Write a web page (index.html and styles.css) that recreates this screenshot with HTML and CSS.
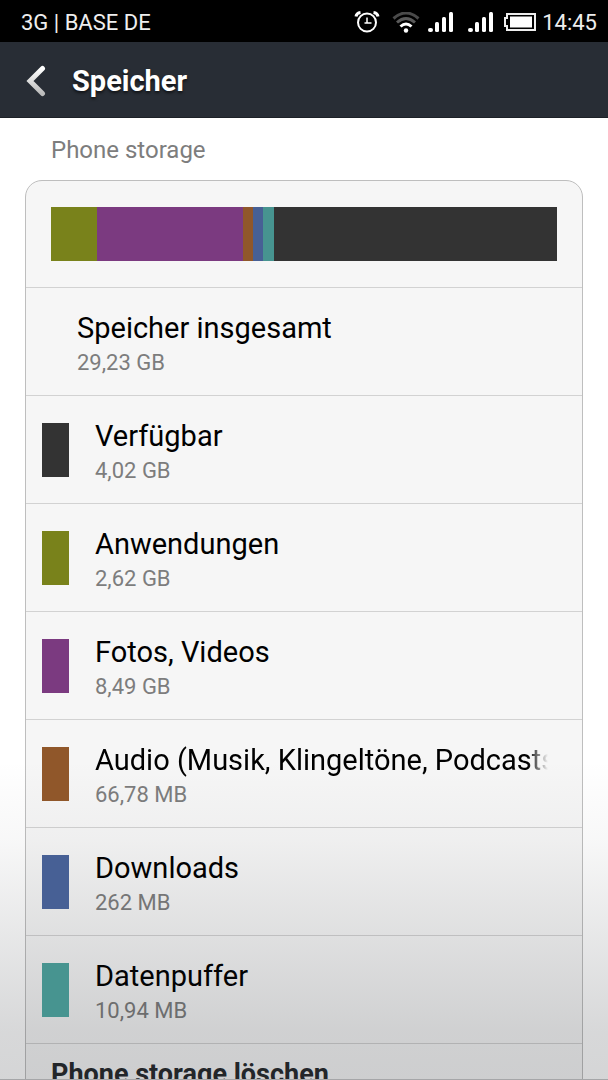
FILE: index.html
```
<!DOCTYPE html>
<html lang="de">
<head>
<meta charset="UTF-8" />
<meta name="viewport" content="width=device-width, initial-scale=1" />
<title>Speicher</title>
<link rel="stylesheet" href="styles.css">
</head>
<body>
<div class="status-bar">
  <div class="carrier">3G | BASE DE</div>
  <div class="status-icons">
    <svg class="alarm" width="26" height="22" viewBox="0 0 26 22" fill="none" stroke="#fff" stroke-width="2">
      <circle cx="13" cy="11.500" r="9" />
      <path d="M13 6.500v5.500h4.500M10.500 12h2" stroke-width="1.500" />
      <path d="M2 5.500Q2.500 2 6.500 1.500M24 5.500Q23.500 2 19.500 1.500" stroke-width="3" />
    </svg>
    <svg class="wifi" width="28" height="21" viewBox="0 0 28 21" fill="none">
      <path d="M1.500 6.500Q14-4.500 26.500 6.500" stroke="#4a4a4a" stroke-width="3" />
      <path d="M5 10.500Q14 2.500 23 10.500" stroke="#5a5a5a" stroke-width="3" />
      <path d="M8.500 14.500Q14 9.500 19.500 14.500" stroke="#fff" stroke-width="3" />
      <circle cx="14" cy="18.500" r="2.200" fill="#fff" />
    </svg>
    <svg class="signal" width="26" height="20" viewBox="0 0 26 20" fill="#fff">
      <rect x="0" y="16" width="5" height="4" rx="2" />
      <rect x="7" y="10" width="4" height="10" rx="1.500" />
      <rect x="14" y="5" width="4" height="15" rx="1.500" />
      <rect x="21" y="0" width="4" height="20" rx="1.500" />
    </svg>
    <svg class="signal" width="26" height="20" viewBox="0 0 26 20" fill="#fff">
      <rect x="0" y="16" width="5" height="4" rx="2" />
      <rect x="7" y="10" width="4" height="10" rx="1.500" />
      <rect x="14" y="5" width="4" height="15" rx="1.500" />
      <rect x="21" y="0" width="4" height="20" rx="1.500" />
    </svg>
    <svg class="battery" width="32" height="18" viewBox="0 0 32 18">
      <path d="M3 1h28v16H3v-4H1V5h2z" fill="none" stroke="#eee" stroke-width="2" />
      <rect x="6" y="3.500" width="22" height="11" fill="#fff" />
    </svg>
    <span class="clock">14:45</span>
  </div>
</div>

<header>
  <button class="back" aria-label="Zurück">
    <svg width="20" height="32" viewBox="0 0 20 32" fill="none">
      <defs>
        <linearGradient id="arrow" x1="0" y1="0" x2="0" y2="1">
          <stop offset="0" stop-color="#fff" />
          <stop offset="1" stop-color="#bbb" />
        </linearGradient>
      </defs>
      <path d="M16.500 3.500L4 16l12.500 12.500" stroke="url(#arrow)" stroke-width="5" stroke-linecap="round" />
    </svg>
  </button>
  <h1>Speicher</h1>
</header>

<main>
  <h2>Phone storage</h2>
  <div class="card">
    <div class="usage">
      <div class="usage-bar">
        <div class="apps" style="width: 9%"></div>
        <div class="photos" style="width: 29%"></div>
        <div class="audio" style="width: 2%"></div>
        <div class="downloads" style="width: 2%"></div>
        <div class="cache" style="width: 2%"></div>
        <div class="free"></div>
      </div>
    </div>
    <ul>
      <li class="total">
        <div class="info"><div class="name">Speicher insgesamt</div><div class="size">29,23 GB</div></div>
      </li>
      <li>
        <span class="swatch free"></span>
        <div class="info"><div class="name">Verfügbar</div><div class="size">4,02 GB</div></div>
      </li>
      <li>
        <span class="swatch apps"></span>
        <div class="info"><div class="name">Anwendungen</div><div class="size">2,62 GB</div></div>
      </li>
      <li>
        <span class="swatch photos"></span>
        <div class="info"><div class="name">Fotos, Videos</div><div class="size">8,49 GB</div></div>
      </li>
      <li>
        <span class="swatch audio"></span>
        <div class="info"><div class="name fade">Audio (Musik, Klingeltöne, Podcasts</div><div class="size">66,78 MB</div></div>
      </li>
      <li>
        <span class="swatch downloads"></span>
        <div class="info"><div class="name">Downloads</div><div class="size">262 MB</div></div>
      </li>
      <li>
        <span class="swatch cache"></span>
        <div class="info"><div class="name">Datenpuffer</div><div class="size">10,94 MB</div></div>
      </li>
    </ul>
    <button class="erase">Phone storage löschen</button>
  </div>
</main>
<div class="shade"></div>
</body>
</html>
```
FILE: styles.css
```
* { box-sizing: border-box; }
body {
  margin: 0; background: #fff; color: #000; font-family: Roboto, "Liberation Sans", sans-serif;
  display: flex; flex-direction: column; height: 100vh; overflow: hidden; position: relative;
}
h1, h2, ul { margin: 0; padding: 0; }
button { font-family: inherit; border: none; background: none; cursor: pointer; }

.status-bar {
  flex: none; height: 42px; padding: 2px 11px 0 21px; background: #000; color: #eee;
  display: flex; justify-content: space-between; align-items: center; font-size: 22px;
}
.status-icons { display: flex; align-items: center; }
.alarm { margin-right: 12px; }
.wifi { margin-right: 8px; }
.signal { margin-right: 14px; }
.signal + .battery { margin-left: -4px; }
.battery { margin-right: 6px; }

header {
  flex: none; height: 76px; padding: 2px 0 0 26px; background: #282d35; color: #fff;
  display: flex; align-items: center; gap: 26px; border-bottom: 1px solid #1d2127;
}
.back { padding: 0; width: 20px; height: 32px; }
.back svg { display: block; }
h1 { font-size: 29px; font-weight: 700; text-shadow: 0 2px 3px rgba(0,0,0,0.6); }

main { flex: 1; min-height: 0; overflow: hidden; padding: 0 25px; }
h2 {
  padding: 16px 26px 14px; font-size: 24px; line-height: 32px; font-weight: 400; color: #7d7d7d;
}
.card {
  background: #f6f6f6; border: 1px solid #bebebe; border-radius: 17px; overflow: hidden;
}
.usage { padding: 26px 25px; }
.usage-bar { display: flex; height: 54px; }
.usage-bar .free { flex: 1; }

.free { background: #333; }
.apps { background: #79821b; }
.photos { background: #7b3a80; }
.audio { background: #90572a; }
.downloads { background: #476095; }
.cache { background: #479490; }

li {
  height: 108px; padding: 0 34px 0 16px; border-top: 1px solid #d2d2d2;
  display: flex; align-items: center; gap: 26px;
}
li.total { padding-left: 51px; }
/* swatches sit above the shade so their colours stay the same as in the bar */
.swatch { flex: none; width: 27px; height: 54px; position: relative; z-index: 1; }
.info { flex: 1; min-width: 0; padding-top: 4px; }
.name { font-size: 29px; line-height: 38px; white-space: nowrap; overflow: hidden; }
.name.fade {
  -webkit-mask-image: linear-gradient(to left, transparent, #000 20px);
  mask-image: linear-gradient(to left, transparent, #000 20px);
}
.size { font-size: 22px; line-height: 32px; color: #7d7d7d; }
.erase {
  display: flex; align-items: flex-start; width: 100%; height: 108px; padding: 12px 25px;
  border-top: 1px solid #d2d2d2; font-size: 27px; line-height: 36px; font-weight: 700;
  color: #26292c; text-align: left;
}

/* darkening at the bottom edge of the screen */
.shade {
  position: absolute; left: 0; right: 0; bottom: 0; height: 320px; pointer-events: none;
  background: linear-gradient(rgba(20,24,30,0), rgba(20,24,30,0.03) 25%, rgba(20,24,30,0.08) 45%, rgba(20,24,30,0.17) 85%, rgba(20,24,30,0.18));
  border-bottom: 1px solid #a5a6a8;
}
```
